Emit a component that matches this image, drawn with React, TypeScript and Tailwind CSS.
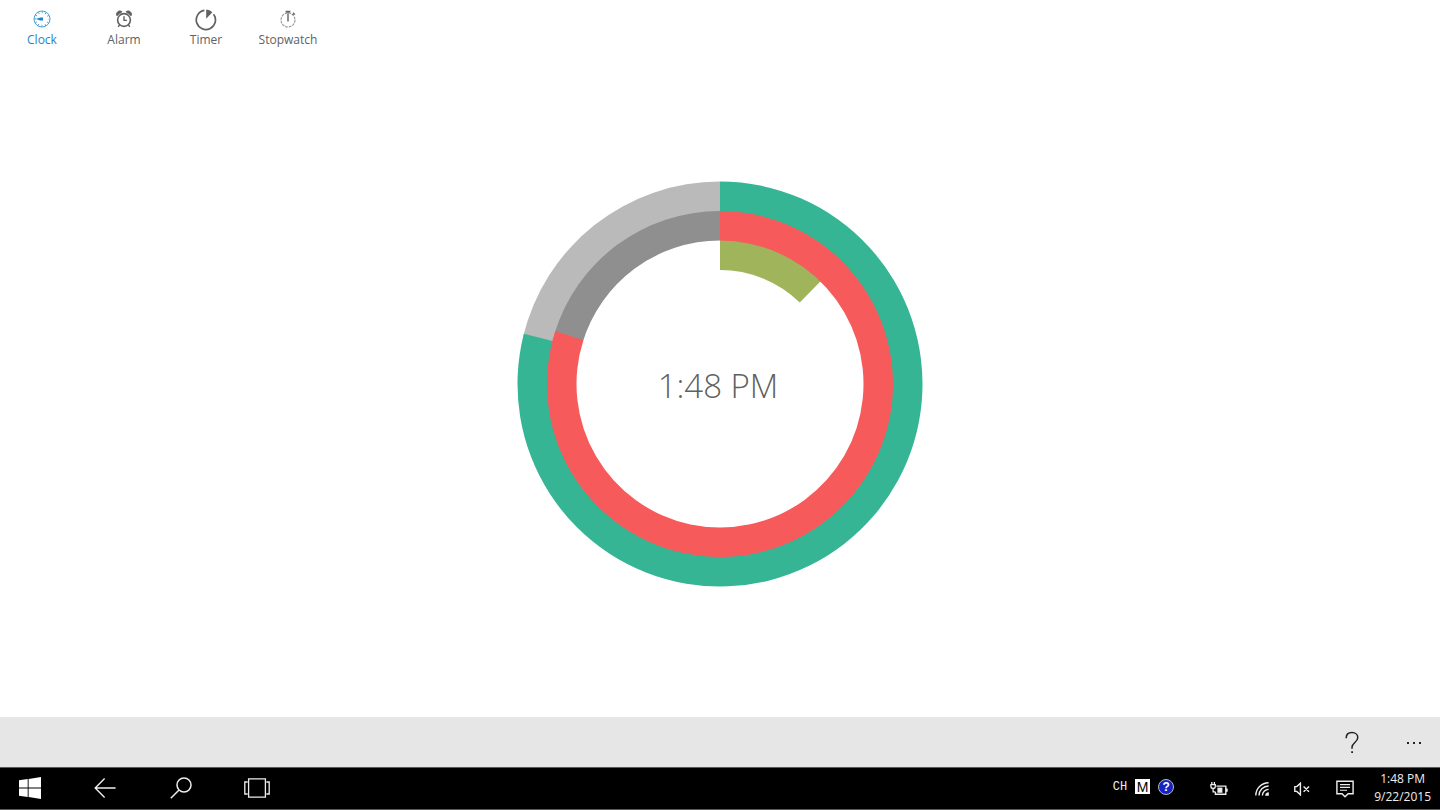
import type { ReactNode } from "react";

const tabs: { label: string; icon: ReactNode; active?: boolean }[] = [
  { label: "Clock", icon: <ClockIcon />, active: true },
  { label: "Alarm", icon: <AlarmIcon /> },
  { label: "Timer", icon: <TimerIcon /> },
  { label: "Stopwatch", icon: <StopwatchIcon /> },
];

// angles are degrees clockwise from twelve o'clock; each ring slightly
// overlaps the one painted after it so no seam shows between them
const arcs = [
  { inner: 114, outer: 144.5, from: 0, to: 44.4, fill: "#a0b45c" },
  { inner: 172, outer: 202.5, from: 283.4, to: 360, fill: "#bababa" },
  { inner: 172, outer: 202.5, from: 0, to: 284.4, fill: "#36b595" },
  { inner: 143.5, outer: 173, from: 286.8, to: 360, fill: "#8f8f8f" },
  { inner: 143.5, outer: 173, from: 0, to: 287.8, fill: "#f75a5a" },
];

const DIAL_CENTER = 203;

function point(radius: number, degrees: number) {
  const a = (degrees * Math.PI) / 180;
  return `${DIAL_CENTER + radius * Math.sin(a)} ${DIAL_CENTER - radius * Math.cos(a)}`;
}

function arcPath(inner: number, outer: number, from: number, to: number) {
  const large = to - from > 180 ? 1 : 0;
  return [
    `M${point(outer, from)}`,
    `A${outer} ${outer} 0 ${large} 1 ${point(outer, to)}`,
    `L${point(inner, to)}`,
    `A${inner} ${inner} 0 ${large} 0 ${point(inner, from)}`,
    "Z",
  ].join(" ");
}

function ClockIcon() {
  return (
    <svg viewBox="0 0 18 18" className="size-[18px]" fill="none" stroke="currentColor" aria-hidden="true">
      <circle cx="9" cy="9" r="8" strokeWidth="1" opacity="0.8" />
      <circle cx="9" cy="9" r="6.6" strokeWidth="1.6" strokeDasharray="0.7 2.756" strokeDashoffset="0.35" />
      <path d="M2.8 9 7.4 7.6H10v2.8H7.4Z" fill="currentColor" stroke="none" />
    </svg>
  );
}

function AlarmIcon() {
  return (
    <svg viewBox="0 0 18 18" className="size-[18px]" fill="none" stroke="currentColor" aria-hidden="true">
      <circle cx="9" cy="10" r="6.4" strokeWidth="1.6" />
      <path d="M9 6.2v4.2h3" strokeWidth="1.4" />
      <path d="M1.6 5.4A3.4 3.4 0 0 1 7 1.7L6 2.8Q3.8 3.6 2.6 5.4ZM16.4 5.4A3.4 3.4 0 0 0 11 1.7l1 1.1q2.2.8 3.4 2.6Z" fill="currentColor" strokeWidth="0.8" />
      <path d="m4.6 14.8-1.4 2M13.4 14.8l1.4 2" strokeWidth="1.4" />
    </svg>
  );
}

function TimerIcon() {
  return (
    <svg viewBox="0 0 24 24" className="size-6" fill="none" stroke="currentColor" aria-hidden="true">
      <path d="M10.4 3.4a9.6 9.6 0 1 0 9.2 3.8" strokeWidth="1.7" />
      <path d="M12.2 2.4a10.4 10.4 0 0 1 6.2 2.8l-6.2 6.6Z" fill="currentColor" stroke="none" />
    </svg>
  );
}

function StopwatchIcon() {
  return (
    <svg viewBox="0 0 18 18" className="size-[18px]" fill="none" stroke="currentColor" aria-hidden="true">
      <circle cx="9" cy="10" r="7" strokeWidth="1.2" strokeDasharray="2.8 0.865" opacity="0.6" />
      <path d="M9 4v7.5" strokeWidth="1.4" />
      <path d="M6.6.8h4.8v1.8H6.6Z" fill="currentColor" stroke="none" />
      <path d="M9 2.4v1.4M13.6 4.9l1.6-1.6M14 2.6l2 2" strokeWidth="1.1" />
    </svg>
  );
}

function Dial({ time }: { time: string }) {
  return (
    <div className="grid place-items-center">
      <svg viewBox="0 0 406 406" className="col-start-1 row-start-1 w-[406px]" aria-hidden="true">
        {arcs.map((arc) => (
          <path key={arc.fill} d={arcPath(arc.inner, arc.outer, arc.from, arc.to)} fill={arc.fill} />
        ))}
      </svg>
      <time className="col-start-1 row-start-1 pr-1 pt-1 text-[33px] leading-10 font-light text-[#606060]">{time}</time>
    </div>
  );
}

function CommandBar() {
  return (
    <footer className="flex h-[50px] items-center justify-end bg-[#e6e6e6] pt-px text-[#222]">
      <button type="button" aria-label="Help" className="grid h-full w-[72px] place-items-center">
        <svg viewBox="0 0 14 24" className="h-6 w-[14px]" fill="none" stroke="currentColor" strokeWidth="1.5" aria-hidden="true">
          <path d="M1.2 7.2C1.2 3.6 3.6 1.6 7 1.6s5.8 2 5.8 5c0 4.6-5.8 5.2-5.8 9.6v1.6" />
          <path d="M6.2 20.2h1.8v1.8H6.2Z" fill="currentColor" stroke="none" />
        </svg>
      </button>
      <button type="button" aria-label="More" className="grid h-full w-[52px] place-items-center">
        <svg viewBox="0 0 16 2" className="h-[2px] w-4" fill="currentColor" aria-hidden="true">
          <path d="M1 0h2v2H1ZM7 0h2v2H7ZM13 0h2v2h-2Z" />
        </svg>
      </button>
    </footer>
  );
}

function Taskbar() {
  return (
    <div className="flex h-[43px] items-center justify-between border-y border-[#5a5a5a] bg-black text-[#eee]">
      <div className="flex h-full items-center pb-px">
        <button type="button" aria-label="Start" className="grid h-full w-[59px] place-items-center">
          <svg viewBox="0 0 22 22" className="size-[22px]" fill="#fff" aria-hidden="true">
            <path d="M0 3.2 8.7 2v8.5H0ZM9.6 1.9 22 0v10.5H9.6ZM0 11.5h8.7V20L0 18.8ZM9.6 11.5H22V22L9.6 20.1Z" />
          </svg>
        </button>
        <button type="button" aria-label="Back" className="ml-2 grid h-full w-[76px] place-items-center">
          <svg viewBox="0 0 22 20" className="h-5 w-[22px]" fill="none" stroke="currentColor" strokeWidth="1.4" aria-hidden="true">
            <path d="M10.6.6 1.2 10l9.4 9.4M1.2 10H21.6" />
          </svg>
        </button>
        <button type="button" aria-label="Search" className="grid h-full w-[76px] place-items-center">
          <svg viewBox="0 0 22 22" className="size-[22px]" fill="none" stroke="currentColor" strokeWidth="1.5" aria-hidden="true">
            <circle cx="14" cy="8" r="7" />
            <path d="m9 13-8.2 8.2" />
          </svg>
        </button>
        <button type="button" aria-label="Task view" className="grid h-full w-[76px] place-items-center">
          <svg viewBox="0 0 26 20" className="h-5 w-[26px]" fill="none" stroke="currentColor" strokeWidth="1.3" aria-hidden="true">
            <path d="M4.6.8h16.8v18.4H4.6ZM3.6 4H.8v12h2.8M22.4 4h2.8v12h-2.8" />
          </svg>
        </button>
      </div>

      <div className="flex h-full items-center pr-[9px]">
        <div className="flex items-center gap-2 pb-1">
          <span className="font-[Liberation_Mono,monospace] text-xs leading-4">CH</span>
          <span className="grid h-[15px] w-[15px] place-items-center bg-white font-[Liberation_Sans,sans-serif] text-sm leading-4 text-black">
            M
          </span>
          <span className="grid size-4 place-items-center rounded-full border border-[#b9b9b9] bg-[#1522c4] font-[Liberation_Sans,sans-serif] text-xs leading-3 font-bold text-white">
            ?
          </span>
        </div>
        <svg viewBox="0 0 18 14" className="ml-9 h-[14px] w-[18px]" fill="none" stroke="currentColor" aria-label="Battery charging" role="img">
          <path d="M6.4 4.1h9.4v8.2H5.4v-2.3M17 6.6v3.2" strokeWidth="1.4" />
          <path d="M7.4 5.6h5v5.2h-5Z" fill="currentColor" stroke="none" />
          <path d="M1.8 0v2.4M4.4 0v2.4M.9 2.6h4.4v1.6a2.2 2.2 0 0 1-4.4 0ZM3.1 6.6v3.2h2.4" strokeWidth="1.3" />
        </svg>
        <svg viewBox="0 0 14 14" className="ml-[27px] size-[14px]" fill="none" stroke="currentColor" strokeWidth="1.4" aria-label="Wi-Fi" role="img">
          <path d="M.8 13.6A12.8 12.8 0 0 1 13.6.8M4 13.6A9.6 9.6 0 0 1 13.6 4M7.4 13.6a6.2 6.2 0 0 1 6.2-6.2" />
          <path d="M10.2 13.8a3.6 3.6 0 0 1 3.6-3.6v3.6Z" fill="currentColor" stroke="none" />
        </svg>
        <svg viewBox="0 0 16 14" className="ml-[25px] h-[14px] w-4" fill="none" stroke="currentColor" strokeWidth="1.4" aria-label="Muted" role="img">
          <path d="M.8 4.6h2L6.4 1.2v11.6L2.8 9.4h-2ZM9.6 4.4l5.4 5.4M15 4.4 9.6 9.8" />
        </svg>
        <svg viewBox="0 0 18 18" className="ml-[26px] size-[18px]" fill="none" stroke="currentColor" strokeWidth="1.4" aria-label="Notifications" role="img">
          <path d="M.9 1.3h16.2v12.4h-5L9 16.8l-3-3.1H.9Z" />
          <path d="M4 4.6h10M4 7.4h10M4 10.2h7" strokeWidth="1.1" />
        </svg>
        <div className="ml-5 pb-0.5 text-center text-xs leading-[18px]">
          <div>1:48 PM</div>
          <div>9/22/2015</div>
        </div>
      </div>
    </div>
  );
}

export default function App() {
  return (
    <div className="flex min-h-screen flex-col bg-white font-[Open_Sans,Noto_Sans,sans-serif]">
      <nav className="flex h-[50px] pl-px">
        {tabs.map((tab) => (
          <button
            key={tab.label}
            type="button"
            className={`flex w-[82px] flex-col items-center pt-[7px] text-xs leading-[18px] ${
              tab.active ? "text-[#1a86cc]" : "text-[#616161]"
            }`}
          >
            <span className="grid h-6 place-items-center">{tab.icon}</span>
            {tab.label}
          </button>
        ))}
      </nav>
      <main className="grid flex-1 place-items-center">
        <Dial time="1:48 PM" />
      </main>
      <CommandBar />
      <Taskbar />
    </div>
  );
}
